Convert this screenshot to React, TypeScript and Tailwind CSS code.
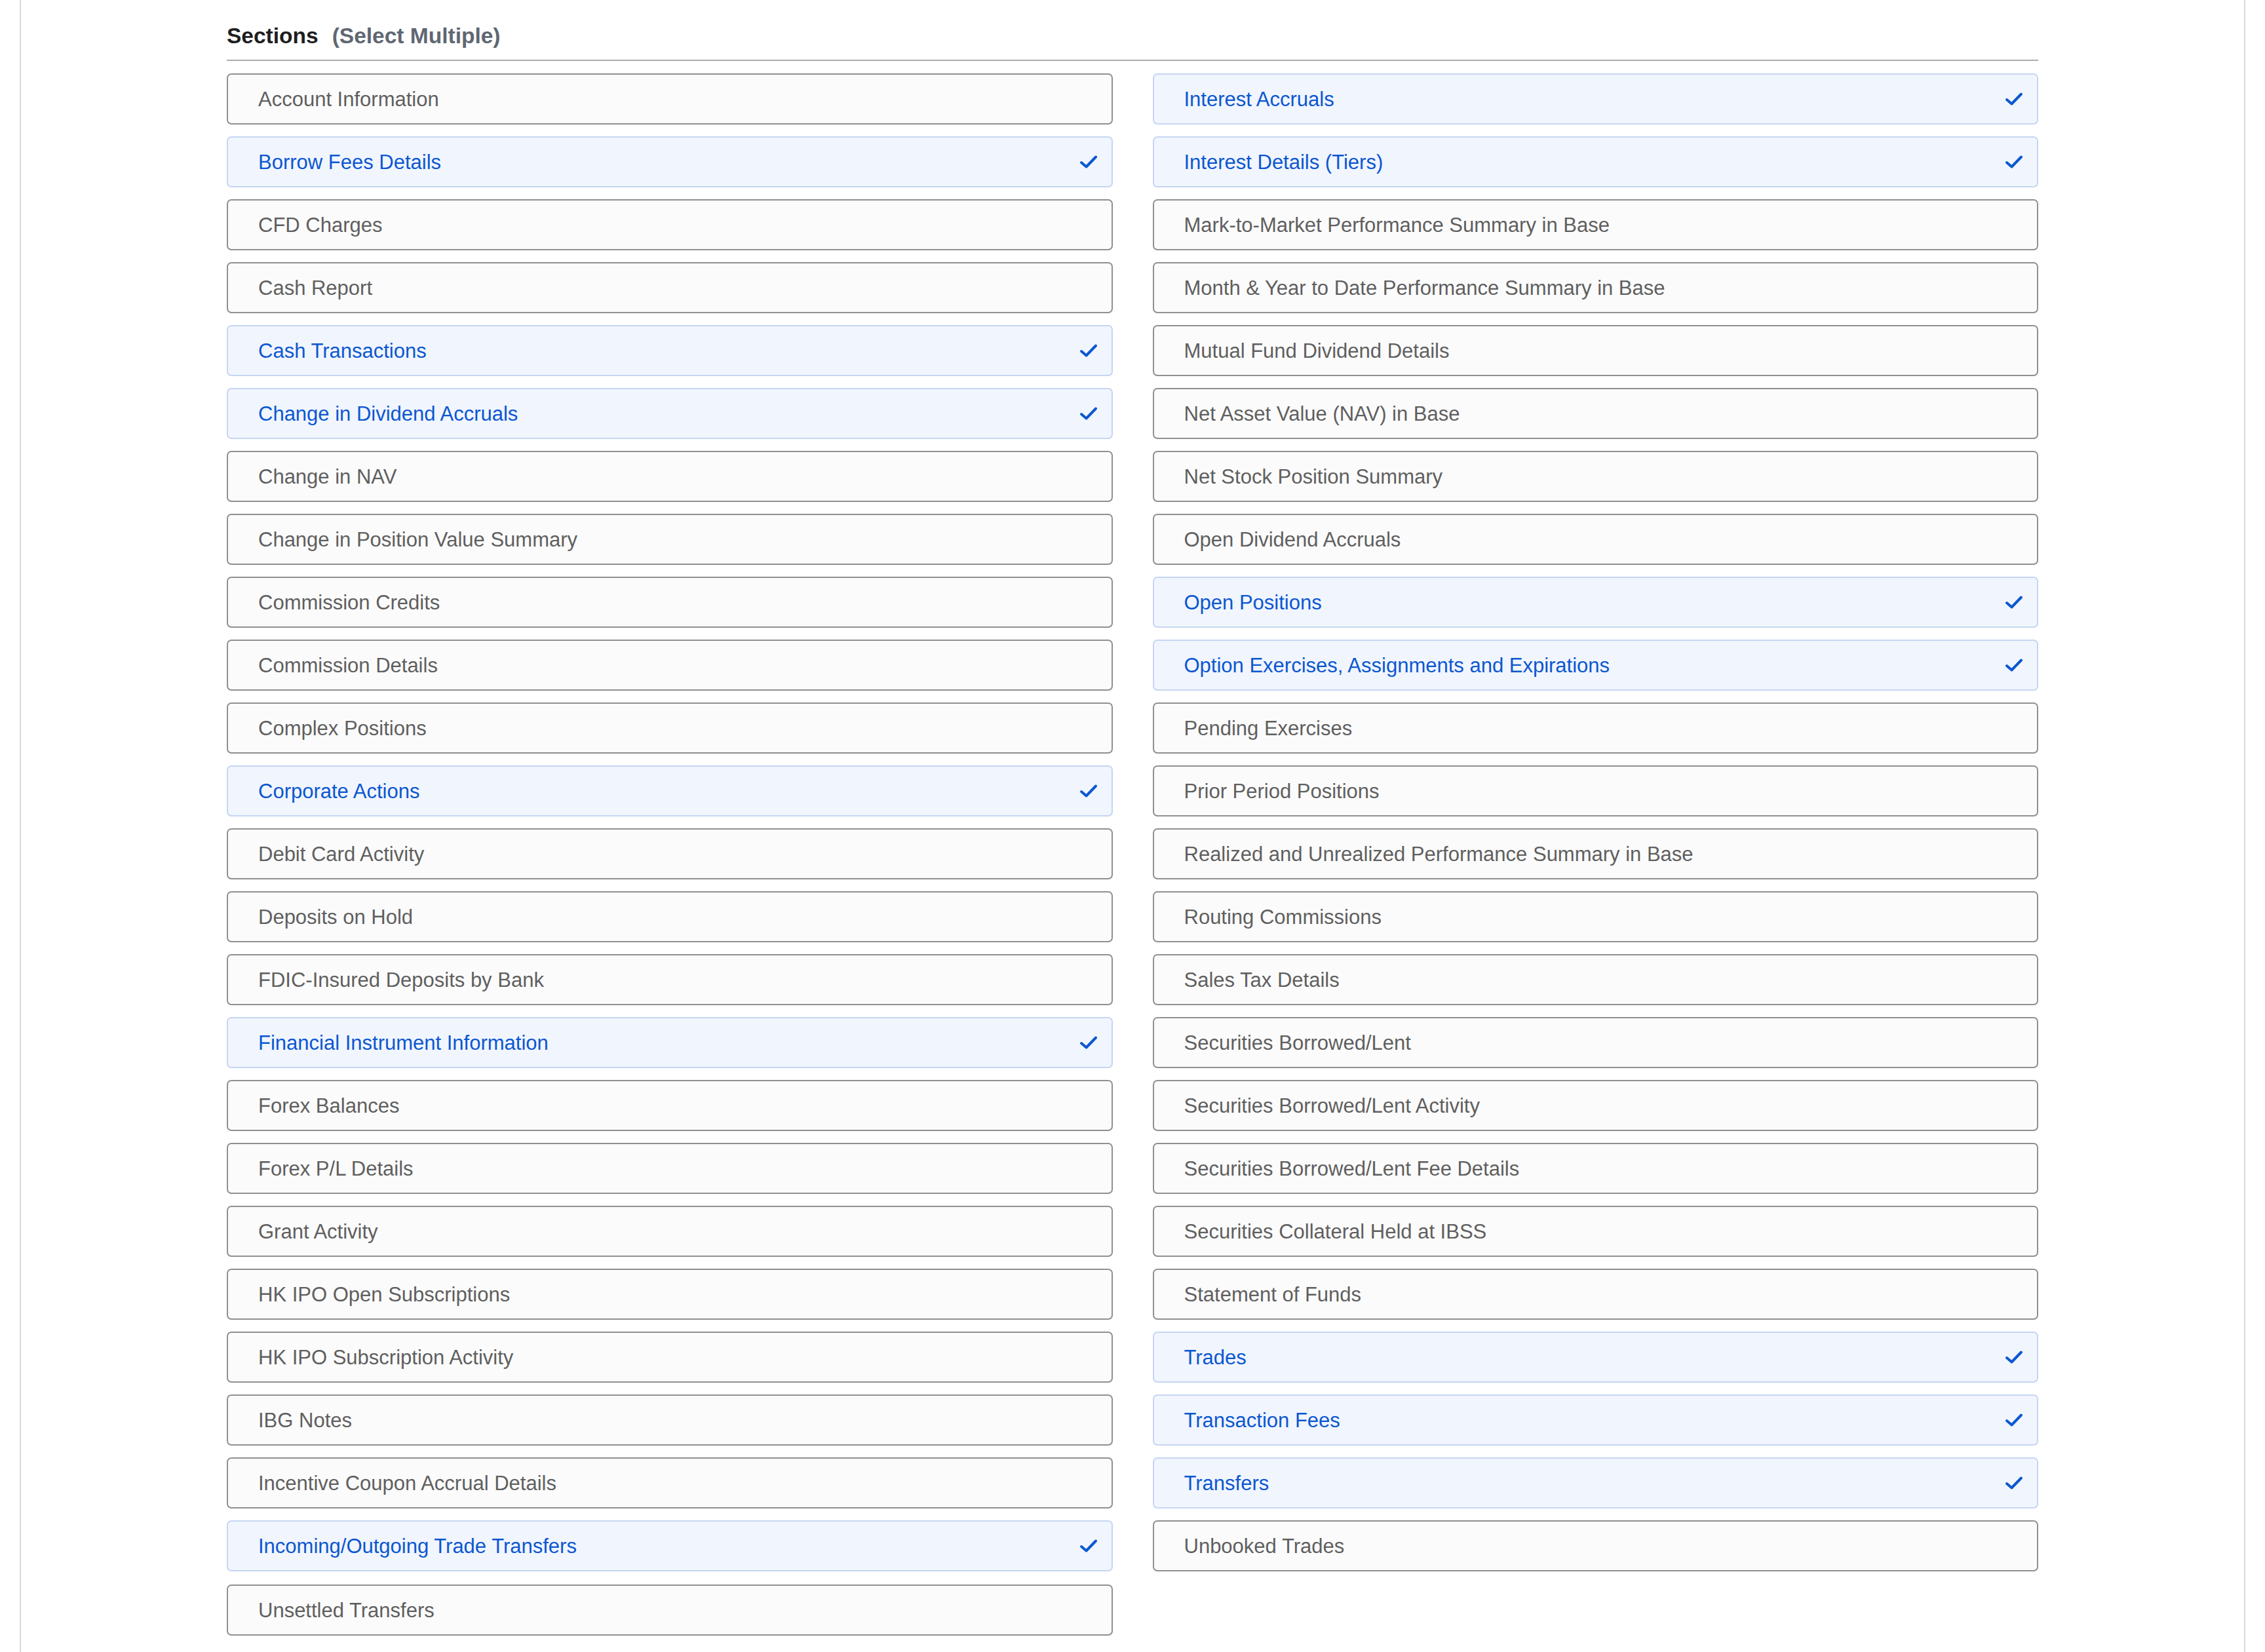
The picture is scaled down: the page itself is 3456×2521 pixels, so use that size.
import React from 'react';

interface Section {
  name: string;
  selected?: boolean;
}

const leftSections: Section[] = [
  { name: 'Account Information' },
  { name: 'Borrow Fees Details', selected: true },
  { name: 'CFD Charges' },
  { name: 'Cash Report' },
  { name: 'Cash Transactions', selected: true },
  { name: 'Change in Dividend Accruals', selected: true },
  { name: 'Change in NAV' },
  { name: 'Change in Position Value Summary' },
  { name: 'Commission Credits' },
  { name: 'Commission Details' },
  { name: 'Complex Positions' },
  { name: 'Corporate Actions', selected: true },
  { name: 'Debit Card Activity' },
  { name: 'Deposits on Hold' },
  { name: 'FDIC-Insured Deposits by Bank' },
  { name: 'Financial Instrument Information', selected: true },
  { name: 'Forex Balances' },
  { name: 'Forex P/L Details' },
  { name: 'Grant Activity' },
  { name: 'HK IPO Open Subscriptions' },
  { name: 'HK IPO Subscription Activity' },
  { name: 'IBG Notes' },
  { name: 'Incentive Coupon Accrual Details' },
  { name: 'Incoming/Outgoing Trade Transfers', selected: true },
  { name: 'Unsettled Transfers' },
];

const rightSections: Section[] = [
  { name: 'Interest Accruals', selected: true },
  { name: 'Interest Details (Tiers)', selected: true },
  { name: 'Mark-to-Market Performance Summary in Base' },
  { name: 'Month & Year to Date Performance Summary in Base' },
  { name: 'Mutual Fund Dividend Details' },
  { name: 'Net Asset Value (NAV) in Base' },
  { name: 'Net Stock Position Summary' },
  { name: 'Open Dividend Accruals' },
  { name: 'Open Positions', selected: true },
  { name: 'Option Exercises, Assignments and Expirations', selected: true },
  { name: 'Pending Exercises' },
  { name: 'Prior Period Positions' },
  { name: 'Realized and Unrealized Performance Summary in Base' },
  { name: 'Routing Commissions' },
  { name: 'Sales Tax Details' },
  { name: 'Securities Borrowed/Lent' },
  { name: 'Securities Borrowed/Lent Activity' },
  { name: 'Securities Borrowed/Lent Fee Details' },
  { name: 'Securities Collateral Held at IBSS' },
  { name: 'Statement of Funds' },
  { name: 'Trades', selected: true },
  { name: 'Transaction Fees', selected: true },
  { name: 'Transfers', selected: true },
  { name: 'Unbooked Trades' },
];

function Check() {
  return (
    <svg width="28" height="22" viewBox="0 0 28 22" fill="none">
      <path
        d="M3 12 L10.5 18.5 L25 3.5"
        stroke="#0b57d0"
        strokeWidth="4"
        strokeLinecap="round"
        strokeLinejoin="round"
      />
    </svg>
  );
}

function SectionItem({ section, last }: { section: Section; last?: boolean }) {
  return (
    <div
      className={`flex h-[78px] items-center justify-between rounded-[7px] border-2 pl-[46px] pr-[21px] ${
        last ? 'mt-[2px]' : ''
      } ${
        section.selected
          ? 'border-[#c6d6f2] bg-[#f1f5fe] text-[#0b57d0]'
          : 'border-[#8f9091] bg-[#fbfbfb] text-[#5f5f5f]'
      }`}
    >
      <span className="text-[31px] leading-none">{section.name}</span>
      {section.selected && <Check />}
    </div>
  );
}

export default function App() {
  return (
    <div className="min-h-screen bg-white font-['Liberation_Sans',Arial,sans-serif]">
      <div className="mx-[30px] min-h-screen border-x-2 border-[#d8d8d8] px-[314px] pt-[38px] pb-[40px]">
        <div className="flex items-baseline text-[33.5px] leading-[33px] font-bold">
          <span className="text-[#1d1e20]">Sections</span>
          <span className="ml-[21px] text-[#5f6772]">(Select Multiple)</span>
        </div>
        <div className="mt-[20px] h-[2px] bg-[#adadad]" />

        <div className="mt-[19px] grid grid-cols-2 gap-x-[61px]">
          <div className="flex flex-col gap-[18px]">
            {leftSections.map((s, i) => (
              <SectionItem key={s.name} section={s} last={i === leftSections.length - 1} />
            ))}
          </div>
          <div className="flex flex-col gap-[18px]">
            {rightSections.map(s => (
              <SectionItem key={s.name} section={s} />
            ))}
          </div>
        </div>
      </div>
    </div>
  );
}
